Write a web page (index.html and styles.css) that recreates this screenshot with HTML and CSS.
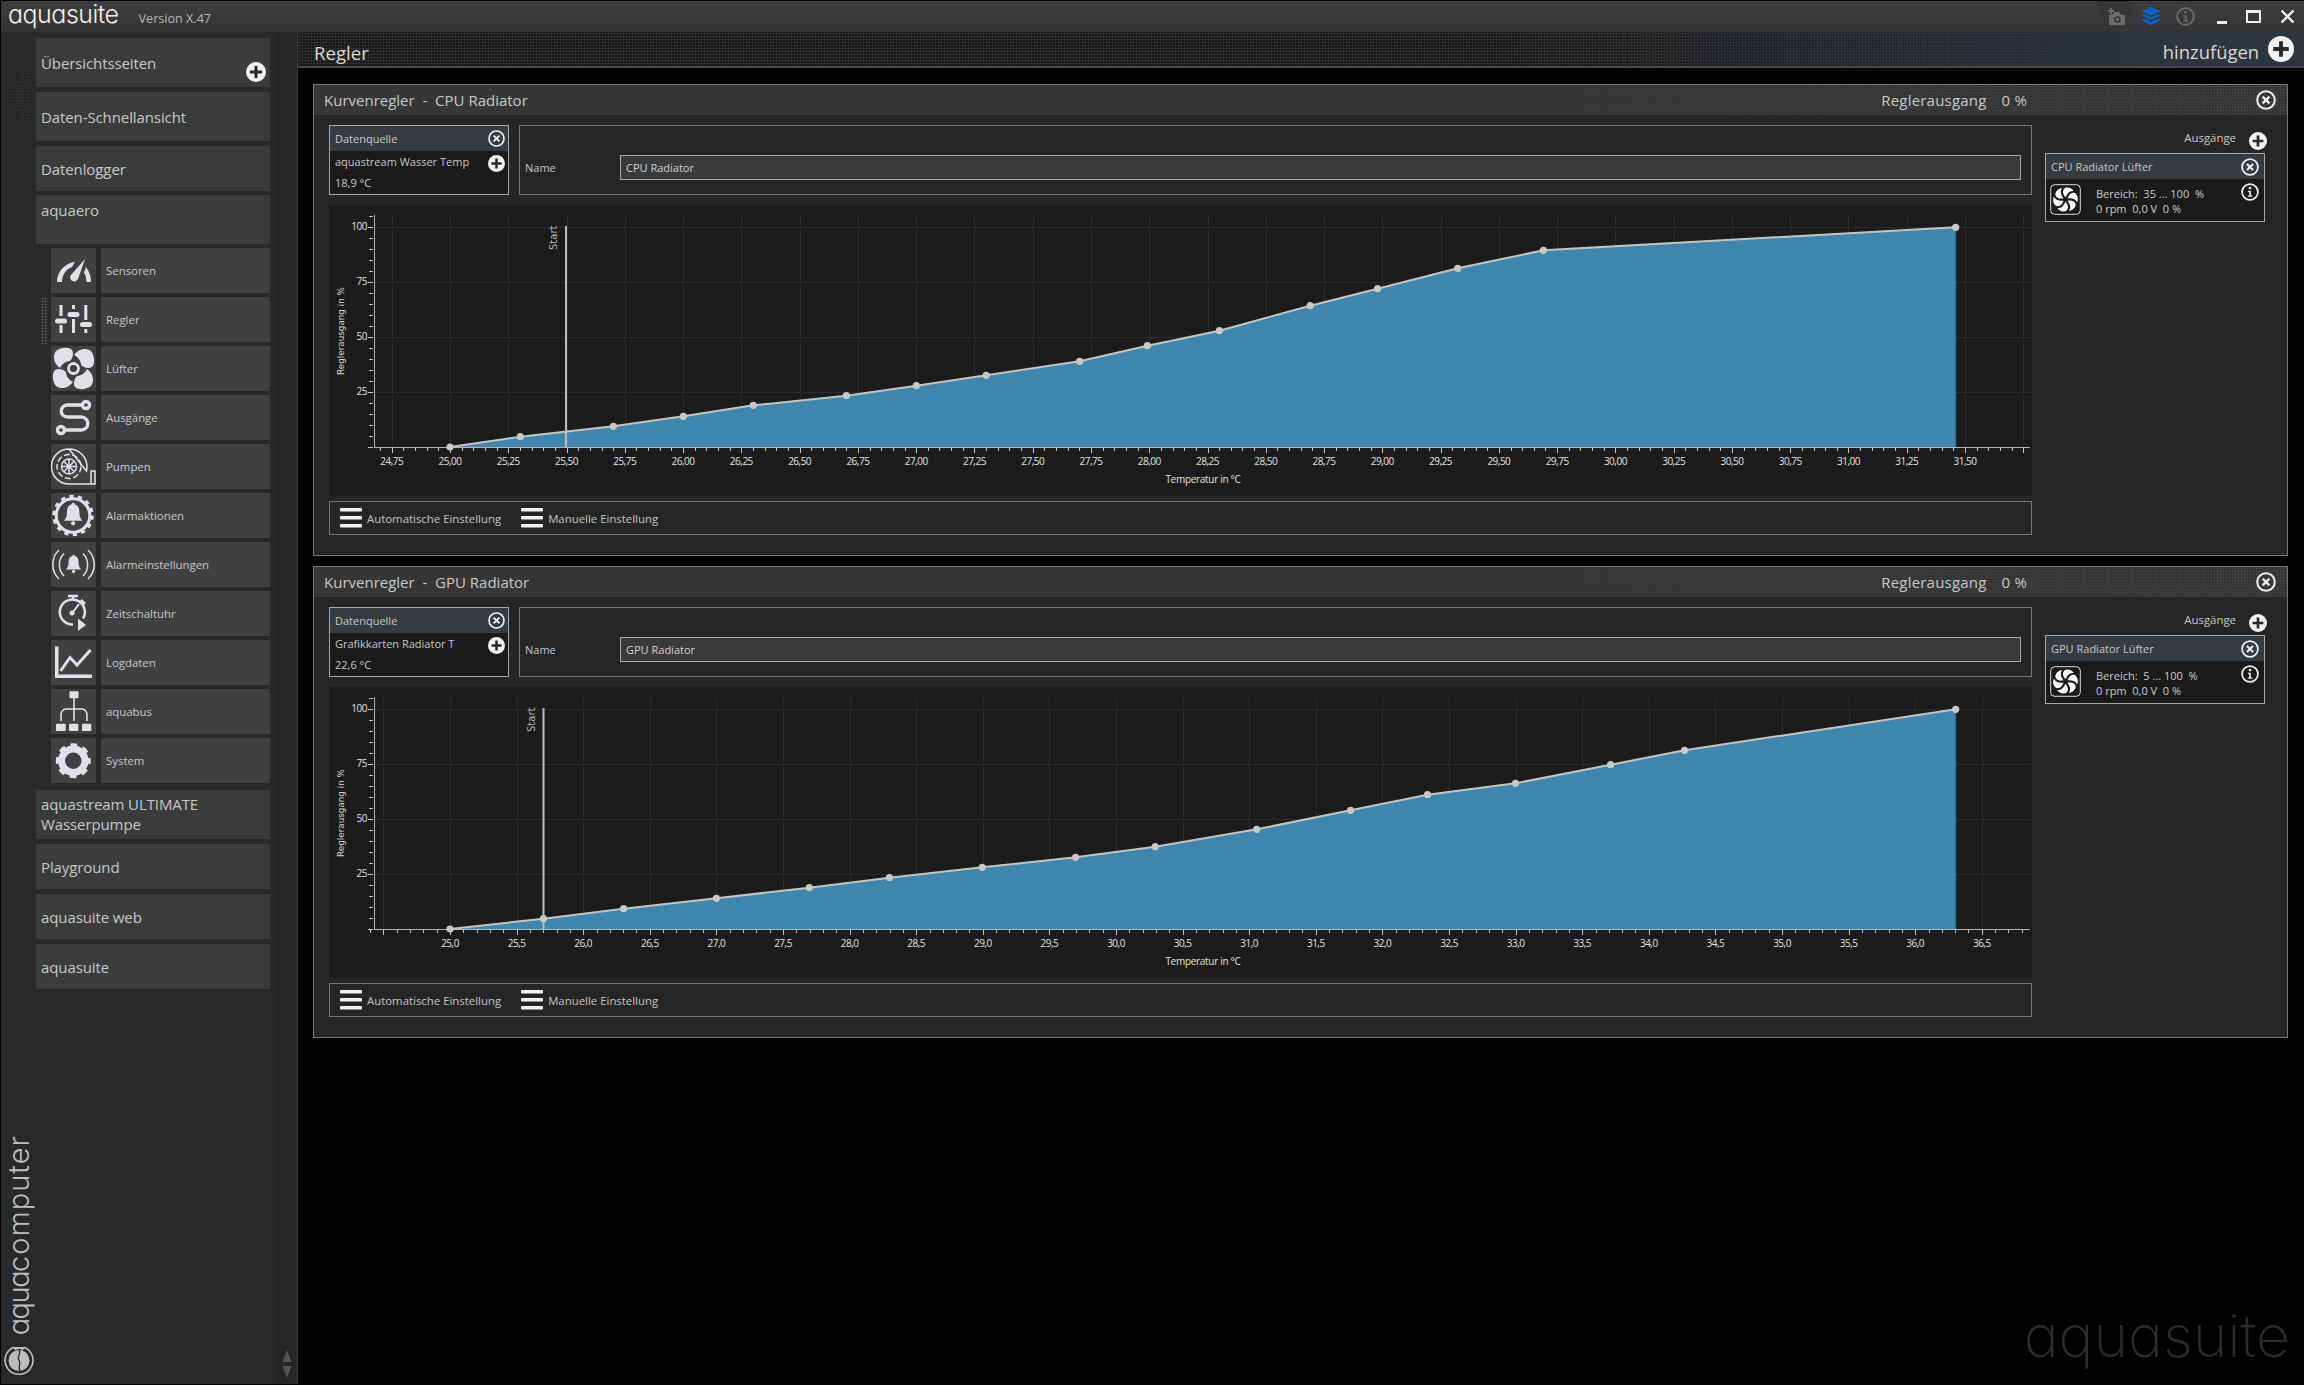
FILE: index.html
```html
<!DOCTYPE html>
<html lang="de">
<head>
<meta charset="utf-8">
<title>aquasuite</title>
<link rel="stylesheet" href="styles.css">
</head>
<body>
<svg class="defs" width="0" height="0">
  <symbol id="i-plus" viewBox="0 0 20 20"><circle cx="10" cy="10" r="10" fill="#f2f2f2"/><path d="M10 4v12M4 10h12" stroke="#2a2a2a" stroke-width="3"/></symbol>
  <symbol id="i-close" viewBox="0 0 20 20"><circle cx="10" cy="10" r="8.8" fill="none" stroke="#eee" stroke-width="2"/><path d="M6.6 6.6l6.8 6.8M13.4 6.6l-6.8 6.8" stroke="#eee" stroke-width="2.4"/></symbol>
  <symbol id="i-info" viewBox="0 0 20 20"><circle cx="10" cy="10" r="8.8" fill="none" stroke="currentColor" stroke-width="2"/><circle cx="10" cy="5.6" r="1.5" fill="currentColor"/><path d="M7.6 8.6h3.4v5.4h1.6v1.4H7.6v-1.4h1.6v-4H7.6z" fill="currentColor"/></symbol>
  <symbol id="i-menu" viewBox="0 0 22 20"><rect y="0" width="22" height="3.6" rx=".8" fill="#f2f2f2"/><rect y="8" width="22" height="3.6" rx=".8" fill="#f2f2f2"/><rect y="16" width="22" height="3.6" rx=".8" fill="#f2f2f2"/></symbol>
  <symbol id="i-fan" viewBox="0 0 31 31">
    <rect x=".7" y=".7" width="29.6" height="29.6" rx="4" fill="none" stroke="#ddd" stroke-width="1"/>
    <g fill="#fff">
      <path d="M15.5 13.2C12.6 10 12 6.2 15 4c3.4-1.2 7.2.2 8.6 3-3.4-.6-6 1.6-8.1 6.2z"/>
      <path d="M15.5 13.2C12.6 10 12 6.2 15 4c3.4-1.2 7.2.2 8.6 3-3.4-.6-6 1.6-8.1 6.2z" transform="rotate(60 15.5 15.5)"/>
      <path d="M15.5 13.2C12.6 10 12 6.2 15 4c3.4-1.2 7.2.2 8.6 3-3.4-.6-6 1.6-8.1 6.2z" transform="rotate(120 15.5 15.5)"/>
      <path d="M15.5 13.2C12.6 10 12 6.2 15 4c3.4-1.2 7.2.2 8.6 3-3.4-.6-6 1.6-8.1 6.2z" transform="rotate(180 15.5 15.5)"/>
      <path d="M15.5 13.2C12.6 10 12 6.2 15 4c3.4-1.2 7.2.2 8.6 3-3.4-.6-6 1.6-8.1 6.2z" transform="rotate(240 15.5 15.5)"/>
      <path d="M15.5 13.2C12.6 10 12 6.2 15 4c3.4-1.2 7.2.2 8.6 3-3.4-.6-6 1.6-8.1 6.2z" transform="rotate(300 15.5 15.5)"/>
    </g>
  </symbol>
  <symbol id="i-bell" viewBox="0 0 45 45"><path d="M22.5 9c-5.500 0-7.500 4-7.500 9.500 0 5-1.200 7.500-3.800 10.500h22.600c-2.600-3-3.800-5.500-3.800-10.500C30 13 28 9 22.500 9z"/><circle cx="22.500" cy="32" r="2.500"/><circle cx="22.500" cy="9" r="1.800"/></symbol>
</svg>

<header class="titlebar">
  <span class="logo">aquasuite</span>
  <span class="version">Version X.47</span>
  <div class="winbtns">
    <span class="winbtn cam">
      <svg width="20" height="18" viewBox="0 0 20 18"><path d="M2 2h2V0h2v2h2v2H6v2H4V4H2z" fill="#6c6c6c"/><path d="M3 7h3l2-3h5l2 3h4v10H3z" fill="#6c6c6c"/><circle cx="11.500" cy="11.500" r="3.300" fill="#333"/><circle cx="11.500" cy="11.500" r="1.800" fill="#6c6c6c"/></svg>
    </span>
    <span class="winbtn layers">
      <svg width="20" height="19" viewBox="0 0 20 19"><path d="M10 0l9.500 4.200L10 8.400.5 4.200z" fill="#0a63c9"/><path d="M3 7l7 3.100L17 7l2.500 1.600L10 13 .5 8.600z" fill="#0a63c9"/><path d="M3 11.600l7 3.100 7-3.100 2.500 1.600L10 18.500.5 13.200z" fill="#0a63c9"/></svg>
    </span>
    <svg class="winbtn info" width="19" height="19"><use href="#i-info"/></svg>
    <span class="wbar"></span>
    <span class="wmax"></span>
    <svg class="wclose" width="15" height="15" viewBox="0 0 15 15"><path d="M1.500 1.500l12 12M13.500 1.500l-12 12" stroke="#eee" stroke-width="2.400"/></svg>
  </div>
</header>

<div class="shell">
  <aside class="side">
    <div class="deco-diamond"></div>
    <div class="deco-sel"></div>
    <nav class="nav">
      <div class="top h49 mb5">Übersichtsseiten<svg class="add" width="20" height="20"><use href="#i-plus"/></svg></div>
      <div class="top h49 mb5">Daten-Schnellansicht</div>
      <div class="top h45 mb4">Datenlogger</div>
      <div class="top h49 mb4 start">aquaero</div>

      <div class="subs">
        <div class="sub"><span class="ico"><svg viewBox="0 0 45 45"><path d="M6 34C6 24 13 16 24 13.500L21 19C15 21 11 27 11 34z"/><path d="M34 11L27 31a4 4 0 0 1-7.500-3.500z"/><path d="M35 19c3 4 5 9 5 15h-4.500c0-4-1-7-2.500-9.500z"/></svg></span><span class="lab">Sensoren</span></div>
        <div class="sub"><span class="ico"><svg viewBox="0 0 45 45"><path d="M8.500 8h3v11h-3zM8.500 28h3v8h-3zM21 8h3v4h-3zM21 22h3v14h-3zM33.300 8h3v15h-3zM33.300 32h3v4h-3z"/><rect x="4" y="21.500" width="12" height="5" rx="2.500"/><rect x="16.500" y="15" width="12" height="5" rx="2.500"/><rect x="29" y="25" width="12" height="5" rx="2.500"/></svg></span><span class="lab">Regler</span></div>
        <div class="sub"><span class="ico"><svg viewBox="0 0 45 45"><g><path d="M5 5c5-4 13-4 16-1 2 3 1 8-2 11-4 0-8 3-10 7C3 18 1 10 5 5z"/><path d="M5 5c5-4 13-4 16-1 2 3 1 8-2 11-4 0-8 3-10 7C3 18 1 10 5 5z" transform="rotate(90 22.500 22.500)"/><path d="M5 5c5-4 13-4 16-1 2 3 1 8-2 11-4 0-8 3-10 7C3 18 1 10 5 5z" transform="rotate(180 22.500 22.500)"/><path d="M5 5c5-4 13-4 16-1 2 3 1 8-2 11-4 0-8 3-10 7C3 18 1 10 5 5z" transform="rotate(270 22.500 22.500)"/></g><circle cx="22.500" cy="22.500" r="5" fill="none" stroke="#dfe1e4" stroke-width="2.800"/></svg></span><span class="lab">Lüfter</span></div>
        <div class="sub"><span class="ico"><svg viewBox="0 0 45 45"><g class="line" stroke-width="3.400"><path d="M31 10H17c-9 0-9 12 0 12h13c9 0 9 13 0 13H14"/><circle cx="35" cy="10" r="3.500"/><circle cx="10" cy="35" r="3.500"/></g></svg></span><span class="lab">Ausgänge</span></div>
        <div class="sub"><span class="ico"><svg viewBox="0 0 45 45"><g class="line" stroke-width="1.500"><path d="M18 5a17.500 17.500 0 1 0 0 35h26V27h-4v13M35.500 27c.5-2 .5-3.500.5-4.500C36 13 28 5 18 5z"/><circle cx="18" cy="22.500" r="12" stroke-dasharray="6 2.500"/><circle cx="18" cy="22.500" r="7.500"/><path d="M18 15v15M10.500 22.500h15M12.700 17.200l10.600 10.600M23.300 17.200L12.700 27.800"/></g></svg></span><span class="lab">Pumpen</span></div>
        <div class="sub"><span class="ico"><svg viewBox="0 0 45 45"><g class="line"><circle cx="22" cy="22.500" r="16.800" stroke-width="3"/><circle cx="22" cy="22.500" r="19" stroke-width="3.500" stroke-dasharray="4.260 4.270"/></g><use href="#i-bell" x="0" y="0" width="45" height="45" transform="translate(3.500 3.800) scale(.83)"/></svg></span><span class="lab">Alarmaktionen</span></div>
        <div class="sub"><span class="ico"><svg viewBox="0 0 45 45"><g class="line" stroke-width="1.500"><path d="M8 8a20 20 0 0 0 0 29M13 11.500a16 16 0 0 0 0 22.500M37 8a20 20 0 0 1 0 29M32 11.500a16 16 0 0 1 0 22.500"/></g><use href="#i-bell" width="45" height="45" transform="translate(7.500 8) scale(.67)"/></svg></span><span class="lab">Alarmeinstellungen</span></div>
        <div class="sub"><span class="ico"><svg viewBox="0 0 45 45"><g class="line" stroke-width="2.500"><path d="M32 27.500A12.500 12.500 0 1 0 22 33.500"/><path d="M17 5h10M22 5v4M30 9l4 4"/><path d="M22 21l6-8" stroke-width="2"/></g><circle cx="21" cy="22" r="2.500"/><path d="M27 27.500l8 6.500-8 6z"/></svg></span><span class="lab">Zeitschaltuhr</span></div>
        <div class="sub"><span class="ico"><svg viewBox="0 0 45 45"><path d="M4 6.500h3.500V34.500H41V38H4z"/><path class="line" stroke-width="3" d="M9.500 31L19 17.500 26 25l13.500-15"/></svg></span><span class="lab">Logdaten</span></div>
        <div class="sub"><span class="ico"><svg viewBox="0 0 45 45"><rect x="18.500" y="2.300" width="9" height="7" rx=".6"/><g class="line" stroke-width="1.600"><path d="M23 9v23M10 32v-6c0-3 2-6 5-6h16c3 0 5 3 5 6v6"/></g><rect x="5" y="34.700" width="9.700" height="7.300" rx=".8"/><rect x="18" y="34.700" width="9.300" height="7.300" rx=".8"/><rect x="31" y="34.700" width="9.300" height="7.300" rx=".8"/></svg></span><span class="lab">aquabus</span></div>
        <div class="sub"><span class="ico"><svg viewBox="0 0 45 45"><g class="line"><circle cx="22.300" cy="22.700" r="11.700" stroke-width="7"/><circle cx="22.300" cy="22.700" r="15.500" stroke-width="4" stroke-dasharray="6.500 5.670" stroke-dashoffset="3.200"/></g></svg></span><span class="lab">System</span></div>
      </div>

      <div class="top h49 mb5 start two">aquastream ULTIMATE Wasserpumpe</div>
      <div class="top h45 mb5">Playground</div>
      <div class="top h45 mb5">aquasuite web</div>
      <div class="top h45">aquasuite</div>
    </nav>
    <div class="brand"><span class="brand-a">aqua</span>computer</div>
    <svg class="brand-logo" width="32" height="30" viewBox="0 0 32 30"><path d="M11 2.200A14 14 0 1 0 21 2.200" fill="none" stroke="#bdbdbd" stroke-width="1.600"/><circle cx="16" cy="15.500" r="10.500" fill="#bdbdbd"/><path d="M9 2h14l-3 3-4-1-4 1z" fill="#bdbdbd"/><path d="M16 5c3 4-3 6 0 10s-2 6 1 11" fill="none" stroke="#2a2a2a" stroke-width="1.300"/></svg>
    <svg class="arrows" width="10" height="30" viewBox="0 0 10 30"><path d="M5 1l4.500 12H.5zM.5 17h9L5 29z" fill="#555"/></svg>
  </aside>

  <main class="main">
    <div class="band">
      <h1 class="page-title">Regler</h1>
      <div class="band-add"><span>hinzufügen</span><svg width="26" height="26"><use href="#i-plus"/></svg></div>
    </div>

    <section class="panel">
      <div class="panel-head">
        <span class="ph-title">Kurvenregler&nbsp; - &nbsp;CPU Radiator</span>
        <span class="ph-out">Reglerausgang<span class="ph-val">0 %</span></span>
        <svg width="20" height="20"><use href="#i-close"/></svg>
      </div>
      <div class="panel-body">
        <div class="left">
          <div class="top-row">
            <div class="source">
              <div class="src-head"><span>Datenquelle</span><svg width="17" height="17"><use href="#i-close"/></svg></div>
              <div class="src-row"><span>aquastream Wasser Temp</span><svg width="17" height="17"><use href="#i-plus"/></svg></div>
              <div class="src-val">18,9 °C</div>
            </div>
            <div class="namebox">
              <span class="name-label">Name</span>
              <div class="name-input">CPU Radiator</div>
            </div>
          </div>
          <div class="chart"><svg id="chart-cpu" width="1703" height="291"></svg></div>
          <div class="foot">
            <span class="foot-btn"><svg width="22" height="20"><use href="#i-menu"/></svg>Automatische Einstellung</span>
            <span class="foot-btn"><svg width="22" height="20"><use href="#i-menu"/></svg>Manuelle Einstellung</span>
          </div>
        </div>
        <div class="right">
          <div class="out-head"><span>Ausgänge</span><svg width="18" height="18"><use href="#i-plus"/></svg></div>
          <div class="card">
            <div class="card-head"><span>CPU Radiator Lüfter</span><svg width="18" height="18"><use href="#i-close"/></svg></div>
            <div class="card-body">
              <svg class="fan" width="31" height="31"><use href="#i-fan"/></svg>
              <div class="card-text"><div>Bereich: &nbsp;35 ... 100 &nbsp;%</div><div>0 rpm &nbsp;0,0 V &nbsp;0 %</div></div>
              <svg class="card-info" width="18" height="18"><use href="#i-info"/></svg>
            </div>
          </div>
        </div>
      </div>
    </section>

    <section class="panel">
      <div class="panel-head">
        <span class="ph-title">Kurvenregler&nbsp; - &nbsp;GPU Radiator</span>
        <span class="ph-out">Reglerausgang<span class="ph-val">0 %</span></span>
        <svg width="20" height="20"><use href="#i-close"/></svg>
      </div>
      <div class="panel-body">
        <div class="left">
          <div class="top-row">
            <div class="source">
              <div class="src-head"><span>Datenquelle</span><svg width="17" height="17"><use href="#i-close"/></svg></div>
              <div class="src-row"><span>Grafikkarten Radiator T</span><svg width="17" height="17"><use href="#i-plus"/></svg></div>
              <div class="src-val">22,6 °C</div>
            </div>
            <div class="namebox">
              <span class="name-label">Name</span>
              <div class="name-input">GPU Radiator</div>
            </div>
          </div>
          <div class="chart"><svg id="chart-gpu" width="1703" height="291"></svg></div>
          <div class="foot">
            <span class="foot-btn"><svg width="22" height="20"><use href="#i-menu"/></svg>Automatische Einstellung</span>
            <span class="foot-btn"><svg width="22" height="20"><use href="#i-menu"/></svg>Manuelle Einstellung</span>
          </div>
        </div>
        <div class="right">
          <div class="out-head"><span>Ausgänge</span><svg width="18" height="18"><use href="#i-plus"/></svg></div>
          <div class="card">
            <div class="card-head"><span>GPU Radiator Lüfter</span><svg width="18" height="18"><use href="#i-close"/></svg></div>
            <div class="card-body">
              <svg class="fan" width="31" height="31"><use href="#i-fan"/></svg>
              <div class="card-text"><div>Bereich: &nbsp;5 ... 100 &nbsp;%</div><div>0 rpm &nbsp;0,0 V &nbsp;0 %</div></div>
              <svg class="card-info" width="18" height="18"><use href="#i-info"/></svg>
            </div>
          </div>
        </div>
      </div>
    </section>

    <div class="watermark">aquasuite</div>
  </main>
</div>
<script src="chart.js"></script>
</body>
</html>
```
FILE: styles.css
```css
* { box-sizing: border-box; }
html, body { margin: 0; padding: 0; }
body {
  width: 2304px; height: 1385px; overflow: hidden; background: #000;
  color: #c8c8c8; font-family: "Open Sans", "Noto Sans", sans-serif;
  display: flex; flex-direction: column;
}
.defs { position: absolute; }
svg { display: block; flex: none; }

/* title bar */
.titlebar {
  height: 31px; margin: 1px 0 0 1px; flex: none; display: flex; align-items: center;
  background: linear-gradient(#3d3d3d, #343434); padding-left: 7px; position: relative;
}
.logo {
  font-family: Inter, sans-serif; font-feature-settings: "cv11"; font-weight: 300;
  font-size: 25px; letter-spacing: -.5px; line-height: 31px; color: #f0f0f0; margin-top: -4px;
}
.version { font-size: 12.6px; color: #b8b8b8; margin-left: 20px; margin-top: 4px; }
.winbtns { margin-left: auto; display: flex; align-items: center; height: 100%; padding-right: 9px; }
.winbtn.cam { width: 33px; height: 100%; background: #363636; display: flex; align-items: center; justify-content: center; margin-right: 9px; }
.winbtn.layers { margin-right: 15px; }
.winbtn.info { color: #6c6c6c; margin-right: 22px; }
.wbar { width: 10px; height: 3px; background: #eee; margin: 11px 19px 0 0; }
.wmax { width: 15px; height: 13px; border: 2px solid #eee; border-top-width: 3px; margin-right: 19px; }

/* layout */
.shell { flex: 1; display: flex; min-height: 0; }
.side {
  width: 297px; flex: none; margin-left: 1px; background: #282828;
  border-right: 1px solid #3d3d3d; position: relative;
  background-image: linear-gradient(90deg, transparent 277px, #252525 277px);
  padding: 6px 0 0 35px; margin-bottom: 1px;
}
.nav { width: 234px; display: flex; flex-direction: column; }
.top {
  background: #3a3c3c; color: #c8c8c8; font-size: 15px; letter-spacing: -.1px; line-height: 20px;
  padding: 0 5px; display: flex; align-items: center; position: relative;
}
.top.start { align-items: flex-start; padding-top: 5px; }
.top.two { padding-top: 4px; }
.h49 { height: 49px; } .h45 { height: 45px; }
.mb4 { margin-bottom: 4px; } .mb5 { margin-bottom: 5px; }
.add { position: absolute; right: 4px; bottom: 5px; }
.subs { display: flex; flex-direction: column; gap: 4px; padding-left: 15px; margin-bottom: 7px; }
.sub { display: flex; height: 45px; gap: 5px; }
.ico { width: 45px; height: 45px; background: #3f4042; flex: none; }
.ico svg { width: 45px; height: 45px; fill: #dfe1e4; }
.ico .line { fill: none; stroke: #dfe1e4; }
.lab { flex: 1; background: #3f4042; font-size: 11.4px; color: #c8c8c8; display: flex; align-items: center; padding-left: 5px; }

.deco-diamond {
  position: absolute; left: 6px; top: 28px; width: 24px; height: 72px;
  background-image: radial-gradient(circle, #3a3a3a .7px, transparent 1px); background-size: 3px 3px;
  clip-path: polygon(100% 0, 100% 100%, 0 50%);
}
.deco-sel {
  position: absolute; left: 40px; top: 265px; width: 7px; height: 47px;
  background-image: radial-gradient(circle, #4c4c4c .9px, transparent 1.2px); background-size: 3px 3px;
}
.brand {
  position: absolute; left: 1px; bottom: 49px; writing-mode: vertical-rl; transform: rotate(180deg);
  font-family: Inter, sans-serif; font-feature-settings: "cv11"; font-weight: 300;
  font-size: 29px; letter-spacing: 1px; line-height: 34px; color: #bdbdbd; white-space: nowrap;
}
.brand-a { letter-spacing: -1.5px; }
.brand-logo { position: absolute; left: 2px; bottom: 9px; }
.arrows { position: absolute; left: 281px; bottom: 5px; }

/* main */
.main { flex: 1; min-width: 0; position: relative; }
.band {
  height: 36px; display: flex; align-items: center; justify-content: space-between;
  padding: 0 10px 0 16px; border-bottom: 2px solid #4a4a4a;
  background-color: #161616;
  background-image: linear-gradient(90deg, transparent 60%, #2d353e 96%),
    radial-gradient(circle, #353535 .9px, transparent 1.2px);
  background-size: 100% 100%, 3px 3px;
}
.page-title { margin: 0; padding-top: 7px; font-weight: 400; font-size: 18.6px; color: #d8d8d8; line-height: 30px; }
.band-add { display: flex; align-items: center; gap: 9px; font-size: 18.4px; color: #d8d8d8; margin-top: -1px; }
.band-add span { margin-top: 6px; }

.panel {
  width: 1975px; height: 472px; margin: 16px 0 0 15px; border: 1px solid #6c7a88; background: #252525;
}
.panel + .panel { margin-top: 10px; }
.panel-head {
  height: 30px; display: flex; align-items: center; padding: 0 11px 0 10px; font-size: 15px; color: #c8c8c8;
  background-color: #363636;
  background-image: linear-gradient(90deg, #363636 60%, transparent 100%),
    radial-gradient(circle, #4c4c4c .7px, transparent 1px);
  background-size: 100% 100%, 3px 3px;
}
.ph-title { flex: 1; }
.ph-out { margin-right: 229px; letter-spacing: .2px; white-space: nowrap; }
.ph-val { margin-left: 15px; }
.panel-body { display: flex; gap: 13px; padding: 10px 0 0 15px; }
.left { width: 1703px; flex: none; display: flex; flex-direction: column; }
.top-row { display: flex; gap: 10px; height: 70px; }

.source { width: 180px; border: 1px solid #a8a8a8; background: #1a1a1a; font-size: 11px; flex: none; }
.src-head { height: 25px; background: #363b40; display: flex; align-items: center; justify-content: space-between; padding: 0 3px 0 5px; }
.src-head span { margin-top: -1px; }
.src-row { height: 24px; display: flex; align-items: center; justify-content: space-between; padding: 0 3px 0 5px; white-space: nowrap; }
.src-row span { margin-top: -3px; }
.src-val { padding-left: 5px; line-height: 18px; margin-top: -1px; }

.namebox { flex: 1; border: 1px solid #6c7a88; display: flex; align-items: center; padding: 15px 10px 0 5px; font-size: 11px; }
.name-label { width: 95px; flex: none; }
.name-input { flex: 1; height: 25px; border: 1px solid #a8a8a8; background: #3a3a3a; padding-left: 5px; line-height: 23px; color: #d0d0d0; }

.chart { height: 291px; margin-top: 10px; background: #1b1b1b; }
.foot { height: 34px; margin-top: 5px; border: 1px solid #6c7a88; display: flex; align-items: center; padding-left: 10px; gap: 20px; font-size: 11.4px; }
.foot-btn { display: flex; align-items: center; gap: 5px; color: #c4c4c4; }

.right { width: 220px; flex: none; }
.out-head { height: 28px; display: flex; align-items: center; justify-content: flex-end; gap: 13px; padding: 0; font-size: 11.4px; }
.out-head svg { margin: 3px -2px 0 0; }
.out-head span { margin-top: -3px; }
.card { height: 69px; border: 1px solid #a8a8a8; background: #1a1a1a; font-size: 11px; }
.card-head { height: 25px; background: #363b40; display: flex; align-items: center; justify-content: space-between; padding: 0 5px 0 5px; }
.card-head span { margin-top: -1px; }
.card-body { display: flex; padding: 5px 5px 0 4px; }
.card-text { flex: 1; padding: 2px 0 0 15px; line-height: 15px; color: #ccc; white-space: pre-wrap; }
.card-info { color: #eee; margin-top: -1px; }

.watermark {
  position: absolute; right: 14px; bottom: 14px;
  font-family: Inter, sans-serif; font-feature-settings: "cv11"; font-weight: 200;
  font-size: 59px; line-height: 70px; color: #2b2b2b;
}

/* chart contents drawn by chart.js */
.g-line { stroke: #2a2b2e; stroke-width: 1; }
.axis { stroke: #aeb6bd; stroke-width: 1; }
.tick { stroke: #c4c4c4; stroke-width: 1; }
.t-label { font-family: "Open Sans", sans-serif; font-size: 10px; letter-spacing: -.5px; fill: #e2e2e2; }
.t-title { font-family: "Open Sans", sans-serif; font-size: 10px; letter-spacing: -.3px; fill: #e2e2e2; }
.t-rot { font-family: "DejaVu Sans", sans-serif; font-size: 8.8px; fill: #dcdcdc; }
.t-start { font-family: "DejaVu Sans", sans-serif; font-size: 10px; fill: #b8b8b8; }
.area { fill: #3e86ab; }
.curve { fill: none; stroke: #c4c4c4; stroke-width: 2; }
.dot { fill: #c8c8c8; }
.edge { stroke: #2f7398; stroke-width: 1; }
.startline { stroke: #bcbcbc; stroke-width: 2; }
```
FILE: chart.js
```js
// Draws both controller curves from their measured data points (page coordinates).
var NS = "http://www.w3.org/2000/svg";

function el(parent, name, attrs, text) {
  var n = document.createElementNS(NS, name);
  for (var k in attrs) n.setAttribute(k, attrs[k]);
  if (text !== undefined) n.textContent = text;
  parent.appendChild(n);
  return n;
}

function draw(cfg) {
  var svg = document.getElementById(cfg.id);
  var dy = cfg.dy;
  svg.setAttribute("viewBox", "329 " + (205 + dy) + " 1703 291");
  var y0 = 447 + dy, top = 216 + dy;
  var xOf = function (i) { return cfg.x0 + i * cfg.step; };

  // grid
  for (var p = 25; p <= 100; p += 25) {
    var gy = y0 - p * 2.2;
    el(svg, "line", { "class": "g-line", x1: 375, x2: 2030, y1: gy + .5, y2: gy + .5 });
  }
  for (var i = cfg.first; i <= cfg.last; i++) {
    var gx = Math.round(xOf(i)) + .5;
    el(svg, "line", { "class": "g-line", x1: gx, x2: gx, y1: top, y2: y0 });
  }

  // curve
  var pts = cfg.points;
  var line = pts.map(function (q) { return q[0] + "," + (q[1] + dy); }).join(" ");
  var last = pts[pts.length - 1];
  el(svg, "polygon", { "class": "area", points: line + " " + last[0] + "," + y0 + " " + pts[0][0] + "," + y0 });
  el(svg, "line", { "class": "edge", x1: last[0], x2: last[0], y1: last[1] + dy, y2: y0 });

  // axes
  el(svg, "line", { "class": "axis", x1: 374.5, x2: 374.5, y1: top - 1, y2: y0 + 1 });
  el(svg, "line", { "class": "axis", x1: 374, x2: 2030, y1: y0 + .5, y2: y0 + .5 });
  for (var u = 0; u <= 105; u += 5) {
    var ty = Math.round(y0 - u * 2.2) + .5;
    el(svg, "line", { "class": "tick", x1: u % 25 === 0 ? 368 : 369, x2: 373, y1: ty, y2: ty });
    if (u % 25 === 0 && u > 0 && u <= 100) {
      el(svg, "text", { "class": "t-label", x: 367, y: ty + 2.5, "text-anchor": "end" }, String(u));
    }
  }
  var minor = cfg.step / 5;
  for (var m = -1; ; m++) {
    var mx = xOf(cfg.first) + m * minor;
    if (mx > 2029) break;
    var tx = Math.round(mx) + .5;
    el(svg, "line", { "class": "tick", x1: tx, x2: tx, y1: y0 + 1, y2: y0 + (m % 5 === 0 ? 6 : 4) });
  }
  for (var j = cfg.firstLabel; j <= cfg.lastLabel; j++) {
    var value = (cfg.v0 + j * cfg.dv).toFixed(cfg.dec).replace(".", ",");
    el(svg, "text", { "class": "t-label", x: xOf(j), y: y0 + 18, "text-anchor": "middle" }, value);
  }
  el(svg, "text", { "class": "t-title", x: 1203, y: y0 + 36, "text-anchor": "middle" }, "Temperatur in °C");
  el(svg, "text", { "class": "t-rot", transform: "translate(344 " + (331 + dy) + ") rotate(-90)", "text-anchor": "middle" }, "Reglerausgang in %");

  // start marker
  el(svg, "line", { "class": "startline", x1: cfg.start, x2: cfg.start, y1: 226 + dy, y2: y0 });
  el(svg, "text", { "class": "t-start", transform: "translate(" + (cfg.start - 9) + " " + (250 + dy) + ") rotate(-90)" }, "Start");

  // curve on top
  el(svg, "polyline", { "class": "curve", points: line });
  pts.forEach(function (q) { el(svg, "circle", { "class": "dot", cx: q[0], cy: q[1] + dy, r: 3.6 }); });
}

draw({
  id: "chart-cpu", dy: 0, x0: 450, step: 58.27, first: -1, last: 27,
  firstLabel: -1, lastLabel: 26, v0: 25, dv: .25, dec: 2, start: 566,
  points: [[450, 447], [520.3, 436.7], [613.3, 426.3], [683.3, 416.3], [753.3, 405.3], [846.4, 395.7],
    [916.3, 385.7], [986.2, 375.3], [1079.6, 361.3], [1147.4, 345.7], [1219.4, 330.7], [1310.2, 305.7],
    [1377.6, 288.7], [1457.7, 268.3], [1543.4, 250.3], [1955.7, 227.3]]
});

draw({
  id: "chart-gpu", dy: 482, x0: 450, step: 66.6, first: -1, last: 23,
  firstLabel: 0, lastLabel: 23, v0: 25, dv: .5, dec: 1, start: 543.5,
  points: [[450, 447], [543.5, 436.7], [623.6, 426.7], [716.4, 416.3], [809.3, 405.7], [889.4, 395.7],
    [982.2, 385.3], [1075.6, 375.3], [1155.2, 364.7], [1256.7, 347.3], [1350.6, 328.3], [1427.5, 312.7],
    [1515.5, 301.3], [1610.6, 282.7], [1684.5, 268.3], [1955.7, 227.3]]
});
```
